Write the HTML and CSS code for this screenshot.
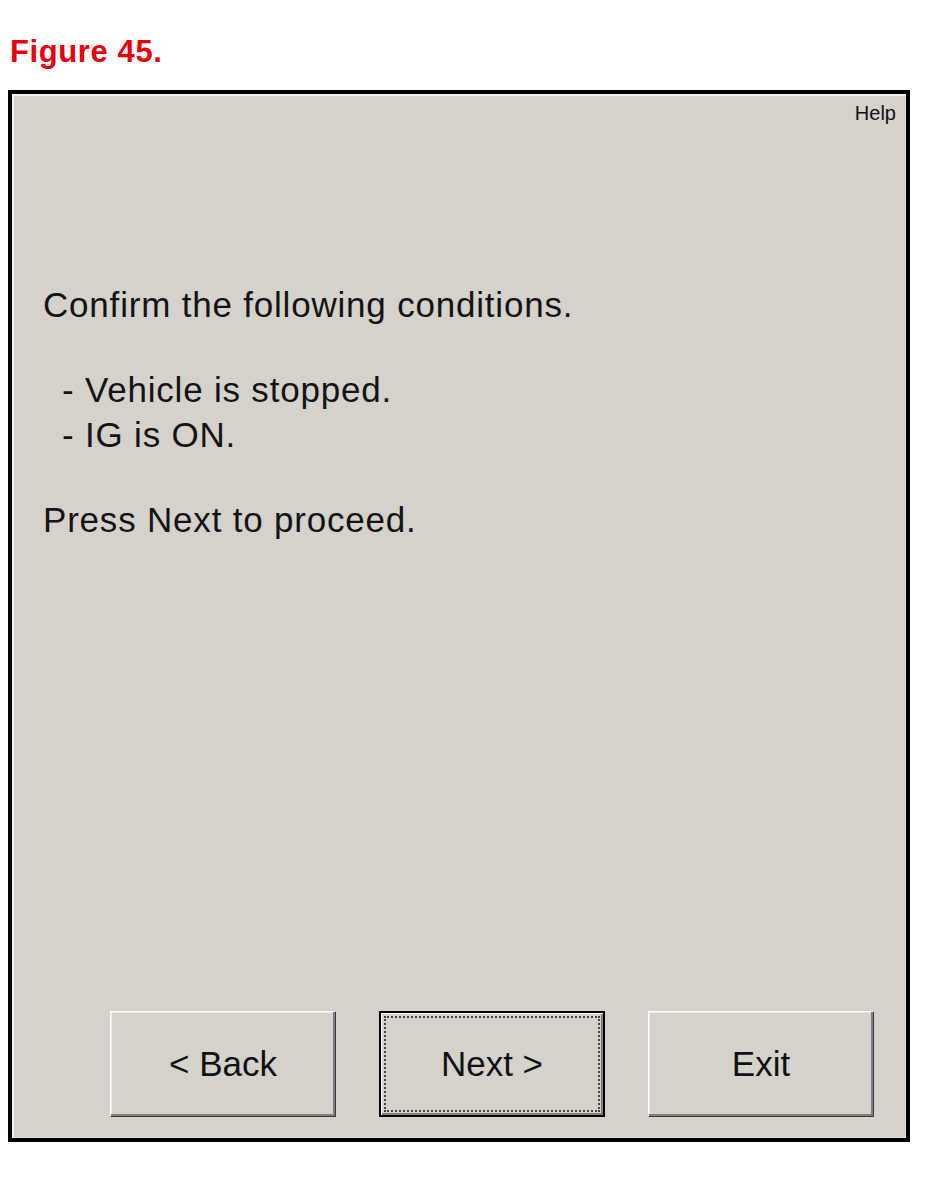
FILE: index.html
```html
<!DOCTYPE html>
<html lang="en">
<head>
<meta charset="utf-8">
<title>Figure 45</title>
<link rel="stylesheet" href="styles.css">
</head>
<body>
<div class="page">
  <h1 class="fig-title">Figure 45.</h1>
  <div class="window">
    <div class="help-row"><span class="help">Help</span></div>
    <div class="content">
      <p class="para">Confirm the following conditions.</p>
      <p class="para indent">- Vehicle is stopped.<br>- IG is ON.</p>
      <p class="para">Press Next to proceed.</p>
    </div>
    <div class="buttons">
      <button class="btn" type="button">&lt; Back</button>
      <button class="btn btn-default" type="button">Next &gt;</button>
      <button class="btn" type="button">Exit</button>
    </div>
  </div>
</div>
</body>
</html>
```
FILE: styles.css
```css
html, body {
  margin: 0;
  padding: 0;
  background: #ffffff;
}

.page {
  padding: 34px 0 0 8px;
  font-family: "Liberation Sans", Arial, sans-serif;
}

.fig-title {
  margin: 0 0 21px 0;
  padding-left: 2px;
  font-size: 31px;
  line-height: 35px;
  font-weight: bold;
  letter-spacing: 0.6px;
  color: #e8000c;
}

.window {
  box-sizing: border-box;
  width: 902px;
  height: 1052px;
  border: 4px solid #000;
  background: #d5d2cc;
  box-shadow: inset 2px 2px #f2f1ee, inset -1px -1px #e6e4df;
  display: flex;
  flex-direction: column;
}

.help-row {
  display: flex;
  justify-content: flex-end;
  padding: 8px 10px 0 0;
}

.help {
  font-size: 20px;
  line-height: 22px;
  color: #111;
}

.content {
  margin-top: 158px;
  padding-left: 31px;
  color: #141414;
  font-size: 35px;
  line-height: 45px;
  letter-spacing: 0.8px;
}

.para {
  margin: 0 0 40px 0;
}

.indent {
  padding-left: 19px;
}

.buttons {
  margin-top: auto;
  display: flex;
  gap: 43px;
  padding: 0 0 21px 98px;
}

.btn {
  box-sizing: border-box;
  width: 226px;
  height: 106px;
  margin: 0;
  padding: 0;
  font-family: "Liberation Sans", Arial, sans-serif;
  font-size: 35px;
  color: #111;
  background: #d5d2cc;
  border: 1px solid;
  border-color: #ffffff #3c3c3c #3c3c3c #ffffff;
  box-shadow: inset -2px -2px #7e7e7e, inset 1px 1px #ecebe7;
}

.btn-default {
  border: 2px solid #000;
  box-shadow: inset 1px 1px #ffffff, inset -2px -2px #7e7e7e;
  outline: 2px dotted #444;
  outline-offset: -7px;
}
```
